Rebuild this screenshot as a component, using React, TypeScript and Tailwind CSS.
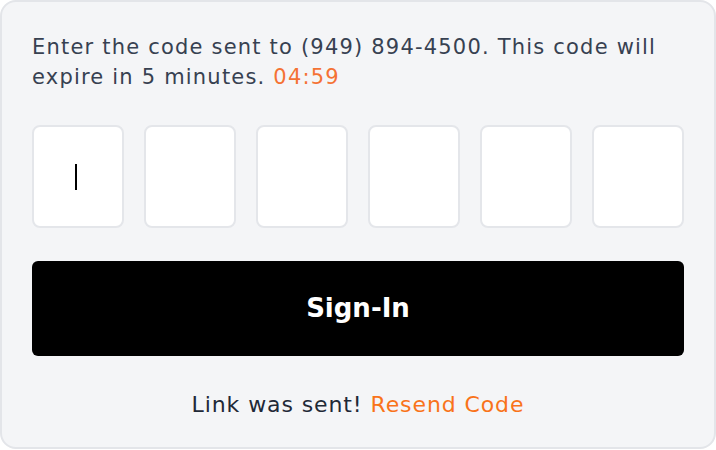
import React from 'react';

export default function App() {
  const digits = ['', '', '', '', '', ''];

  return (
    <div className="w-[716px] h-[450px] bg-white" style={{ fontFamily: '"DejaVu Sans", "Open Sans", sans-serif' }}>
      <div className="h-[449px] rounded-2xl border-2 border-[#e3e5e9] bg-[#f4f5f7] px-[30px] pt-[30px]">
        <p className="text-[21px] leading-[30px] tracking-[1.2px] text-[#374151]">
          Enter the code sent to (949) 894-4500. This code will
          <br />
          expire in 5 minutes. <span className="text-[#f47234]">04:59</span>
        </p>

        <div className="mt-[33px] flex gap-5">
          {digits.map((d, i) => (
            <div
              key={i}
              className="flex h-[103px] w-[92px] items-center justify-center rounded-lg border-2 border-[#e4e6ea] bg-white"
            >
              {i === 0 && <span className="-ml-1 h-[26px] w-[2px] bg-black" />}
            </div>
          ))}
        </div>

        <button className="mt-[33px] flex h-[95px] w-full items-center justify-center rounded-md bg-black text-[26px] font-bold text-white">
          Sign-In
        </button>

        <p className="mt-[34px] text-center text-[22px] leading-[30px] tracking-[0.9px] text-[#1f2937]">
          Link was sent! <span className="text-[#f9731a]">Resend Code</span>
        </p>
      </div>
    </div>
  );
}
